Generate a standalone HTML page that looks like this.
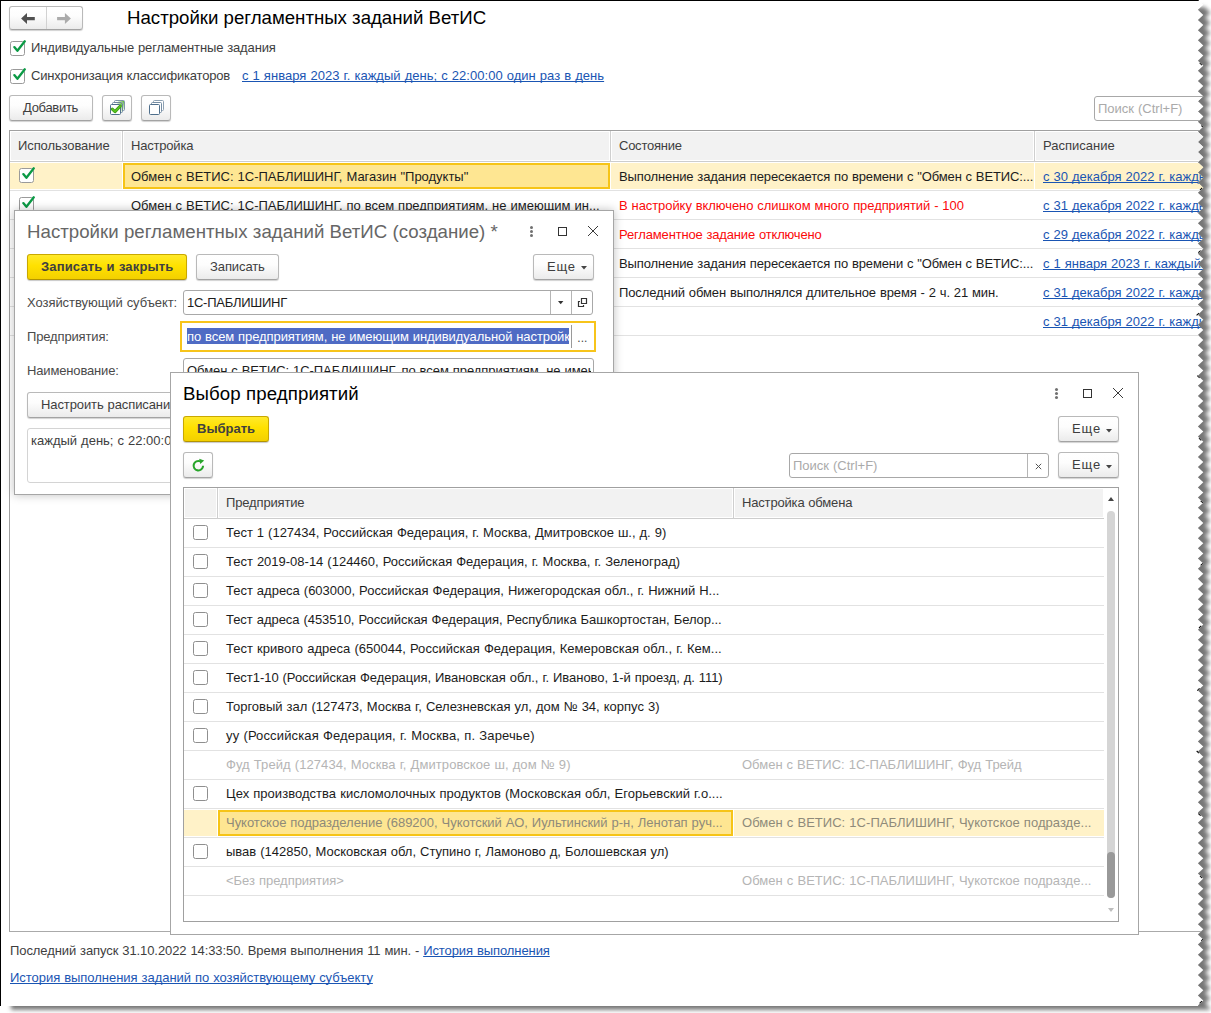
<!DOCTYPE html>
<html lang="ru"><head><meta charset="utf-8"><title>Настройки регламентных заданий ВетИС</title>
<style>
*{box-sizing:border-box;margin:0;padding:0}
html,body{width:1211px;height:1013px;background:#fff;overflow:hidden}
body{font-family:"Liberation Sans",Arial,sans-serif;font-size:13px;color:#3e3e3e;position:relative;word-spacing:.4px}
#wrap{position:absolute;left:0;top:0;width:1211px;height:1013px}
#page{position:absolute;left:0;top:0;width:1211px;height:1013px;background:#fff;clip-path:polygon(0px 0px,1198.21px 0px,1203.3px 4.79px,1197.9px 9.87px,1203.3px 14.95px,1197.9px 20.03px,1203.3px 25.11px,1197.9px 30.19px,1203.3px 35.27px,1197.9px 40.35px,1203.3px 45.43px,1197.9px 50.51px,1203.3px 55.59px,1197.9px 60.67px,1203.3px 65.75px,1197.9px 70.83px,1203.3px 75.91px,1197.9px 80.99px,1203.3px 86.07px,1197.9px 91.15px,1203.3px 96.23px,1197.9px 101.31px,1203.3px 106.39px,1197.9px 111.47px,1203.3px 116.55px,1197.9px 121.63px,1203.3px 126.71px,1197.9px 131.79px,1203.3px 136.87px,1197.9px 141.95px,1203.3px 147.03px,1197.9px 152.11px,1203.3px 157.19px,1197.9px 162.27px,1203.3px 167.35px,1197.9px 172.43px,1203.3px 177.51px,1197.9px 182.59px,1203.3px 187.67px,1197.9px 192.75px,1203.3px 197.83px,1197.9px 202.91px,1203.3px 207.99px,1197.9px 213.07px,1203.3px 218.15px,1197.9px 223.23px,1203.3px 228.31px,1197.9px 233.39px,1203.3px 238.47px,1197.9px 243.55px,1203.3px 248.63px,1197.9px 253.71px,1203.3px 258.79px,1197.9px 263.87px,1203.3px 268.95px,1197.9px 274.03px,1203.3px 279.11px,1197.9px 284.19px,1203.3px 289.27px,1197.9px 294.35px,1203.3px 299.43px,1197.9px 304.51px,1203.3px 309.59px,1197.9px 314.67px,1203.3px 319.75px,1197.9px 324.83px,1203.3px 329.91px,1197.9px 334.99px,1203.3px 340.07px,1197.9px 345.15px,1203.3px 350.23px,1197.9px 355.31px,1203.3px 360.39px,1197.9px 365.47px,1203.3px 370.55px,1197.9px 375.63px,1203.3px 380.71px,1197.9px 385.79px,1203.3px 390.87px,1197.9px 395.95px,1203.3px 401.03px,1197.9px 406.11px,1203.3px 411.19px,1197.9px 416.27px,1203.3px 421.35px,1197.9px 426.43px,1203.3px 431.51px,1197.9px 436.59px,1203.3px 441.67px,1197.9px 446.75px,1203.3px 451.83px,1197.9px 456.91px,1203.3px 461.99px,1197.9px 467.07px,1203.3px 472.15px,1197.9px 477.23px,1203.3px 482.31px,1197.9px 487.39px,1203.3px 492.47px,1197.9px 497.55px,1203.3px 502.63px,1197.9px 507.71px,1203.3px 512.79px,1197.9px 517.87px,1203.3px 522.95px,1197.9px 528.03px,1203.3px 533.11px,1197.9px 538.19px,1203.3px 543.27px,1197.9px 548.35px,1203.3px 553.43px,1197.9px 558.51px,1203.3px 563.59px,1197.9px 568.67px,1203.3px 573.75px,1197.9px 578.83px,1203.3px 583.91px,1197.9px 588.99px,1203.3px 594.07px,1197.9px 599.15px,1203.3px 604.23px,1197.9px 609.31px,1203.3px 614.39px,1197.9px 619.47px,1203.3px 624.55px,1197.9px 629.63px,1203.3px 634.71px,1197.9px 639.79px,1203.3px 644.87px,1197.9px 649.95px,1203.3px 655.03px,1197.9px 660.11px,1203.3px 665.19px,1197.9px 670.27px,1203.3px 675.35px,1197.9px 680.43px,1203.3px 685.51px,1197.9px 690.59px,1203.3px 695.67px,1197.9px 700.75px,1203.3px 705.83px,1197.9px 710.91px,1203.3px 715.99px,1197.9px 721.07px,1203.3px 726.15px,1197.9px 731.23px,1203.3px 736.31px,1197.9px 741.39px,1203.3px 746.47px,1197.9px 751.55px,1203.3px 756.63px,1197.9px 761.71px,1203.3px 766.79px,1197.9px 771.87px,1203.3px 776.95px,1197.9px 782.03px,1203.3px 787.11px,1197.9px 792.19px,1203.3px 797.27px,1197.9px 802.35px,1203.3px 807.43px,1197.9px 812.51px,1203.3px 817.59px,1197.9px 822.67px,1203.3px 827.75px,1197.9px 832.83px,1203.3px 837.91px,1197.9px 842.99px,1203.3px 848.07px,1197.9px 853.15px,1203.3px 858.23px,1197.9px 863.31px,1203.3px 868.39px,1197.9px 873.47px,1203.3px 878.55px,1197.9px 883.63px,1203.3px 888.71px,1197.9px 893.79px,1203.3px 898.87px,1197.9px 903.95px,1203.3px 909.03px,1197.9px 914.11px,1203.3px 919.19px,1197.9px 924.27px,1203.3px 929.35px,1197.9px 934.43px,1203.3px 939.51px,1197.9px 944.59px,1203.3px 949.67px,1197.9px 954.75px,1203.3px 959.83px,1197.9px 964.91px,1203.3px 969.99px,1197.9px 975.07px,1203.3px 980.15px,1197.9px 985.23px,1203.3px 990.31px,1197.9px 995.39px,1203.3px 1000.47px,1197.9px 1005.55px,1198.38px 1006px,0px 1006px);overflow:hidden}
#page:before{content:"";position:absolute;left:0;top:0;width:1211px;height:1px;background:#000;z-index:50}
#page:after{content:"";position:absolute;left:0;top:0;width:1px;height:1013px;background:#000;z-index:50}
.a{position:absolute;white-space:nowrap}
.t{position:absolute;white-space:nowrap;height:29px;line-height:29px}
.cb{position:absolute;overflow:visible}
.lnk{color:#1a55b3;text-decoration:underline;text-underline-offset:1px;text-decoration-skip-ink:none;text-decoration-thickness:1px}
.red{color:#fb0a0a}
.btn{position:absolute;height:26px;border:1px solid #b9b9b9;border-bottom-color:#a3a3a3;border-radius:3px;background:linear-gradient(#fff 0%,#fdfdfd 40%,#ebebeb 100%);box-shadow:0 1px 1px rgba(0,0,0,.18)}
.ybtn{position:absolute;height:26px;border:1px solid #c9a800;border-bottom-color:#b39400;border-radius:3px;background:linear-gradient(#ffe92a 0%,#ffe100 45%,#f3d000 100%);box-shadow:0 1px 1px rgba(0,0,0,.22)}
.b{font-weight:bold;color:#404040}
.inp{position:absolute;height:25px;border:1px solid #a8a8a8;border-radius:3px;background:#fff}
.title{font-size:18.67px;line-height:24px;height:24px;word-spacing:0}
.dlg{position:absolute;background:#fff;border:1px solid #a6a6a6}
.hdr{position:absolute;background:#f2f2f2}
.vl{position:absolute;width:1px;background:#cfcfcf}
.hl{position:absolute;height:1px;background:#e2e2e2}
.arr{position:absolute;width:0;height:0;border-left:3px solid transparent;border-right:3px solid transparent;border-top:3.5px solid #444}
.gray{color:#b5b5b5}
.dk{color:#1c1c1c}
.lb{color:#4a4a4a}
.sel{color:#8e8a7a}
</style></head>
<body>
<div id="wrap"><svg id="shadow" width="1211" height="1013" viewBox="0 0 1211 1013" style="position:absolute;left:0;top:0"><defs><filter id="bl" x="-2%" y="-2%" width="104%" height="104%"><feGaussianBlur stdDeviation="2.3"/></filter></defs><polygon points="11,7 1205.81,7 1205.1,7.67 1210.5,12.75 1205.1,17.83 1210.5,22.91 1205.1,27.99 1210.5,33.07 1205.1,38.15 1210.5,43.23 1205.1,48.31 1210.5,53.39 1205.1,58.47 1210.5,63.55 1205.1,68.63 1210.5,73.71 1205.1,78.79 1210.5,83.87 1205.1,88.95 1210.5,94.03 1205.1,99.11 1210.5,104.19 1205.1,109.27 1210.5,114.35 1205.1,119.43 1210.5,124.51 1205.1,129.59 1210.5,134.67 1205.1,139.75 1210.5,144.83 1205.1,149.91 1210.5,154.99 1205.1,160.07 1210.5,165.15 1205.1,170.23 1210.5,175.31 1205.1,180.39 1210.5,185.47 1205.1,190.55 1210.5,195.63 1205.1,200.71 1210.5,205.79 1205.1,210.87 1210.5,215.95 1205.1,221.03 1210.5,226.11 1205.1,231.19 1210.5,236.27 1205.1,241.35 1210.5,246.43 1205.1,251.51 1210.5,256.59 1205.1,261.67 1210.5,266.75 1205.1,271.83 1210.5,276.91 1205.1,281.99 1210.5,287.07 1205.1,292.15 1210.5,297.23 1205.1,302.31 1210.5,307.39 1205.1,312.47 1210.5,317.55 1205.1,322.63 1210.5,327.71 1205.1,332.79 1210.5,337.87 1205.1,342.95 1210.5,348.03 1205.1,353.11 1210.5,358.19 1205.1,363.27 1210.5,368.35 1205.1,373.43 1210.5,378.51 1205.1,383.59 1210.5,388.67 1205.1,393.75 1210.5,398.83 1205.1,403.91 1210.5,408.99 1205.1,414.07 1210.5,419.15 1205.1,424.23 1210.5,429.31 1205.1,434.39 1210.5,439.47 1205.1,444.55 1210.5,449.63 1205.1,454.71 1210.5,459.79 1205.1,464.87 1210.5,469.95 1205.1,475.03 1210.5,480.11 1205.1,485.19 1210.5,490.27 1205.1,495.35 1210.5,500.43 1205.1,505.51 1210.5,510.59 1205.1,515.67 1210.5,520.75 1205.1,525.83 1210.5,530.91 1205.1,535.99 1210.5,541.07 1205.1,546.15 1210.5,551.23 1205.1,556.31 1210.5,561.39 1205.1,566.47 1210.5,571.55 1205.1,576.63 1210.5,581.71 1205.1,586.79 1210.5,591.87 1205.1,596.95 1210.5,602.03 1205.1,607.11 1210.5,612.19 1205.1,617.27 1210.5,622.35 1205.1,627.43 1210.5,632.51 1205.1,637.59 1210.5,642.67 1205.1,647.75 1210.5,652.83 1205.1,657.91 1210.5,662.99 1205.1,668.07 1210.5,673.15 1205.1,678.23 1210.5,683.31 1205.1,688.39 1210.5,693.47 1205.1,698.55 1210.5,703.63 1205.1,708.71 1210.5,713.79 1205.1,718.87 1210.5,723.95 1205.1,729.03 1210.5,734.11 1205.1,739.19 1210.5,744.27 1205.1,749.35 1210.5,754.43 1205.1,759.51 1210.5,764.59 1205.1,769.67 1210.5,774.75 1205.1,779.83 1210.5,784.91 1205.1,789.99 1210.5,795.07 1205.1,800.15 1210.5,805.23 1205.1,810.31 1210.5,815.39 1205.1,820.47 1210.5,825.55 1205.1,830.63 1210.5,835.71 1205.1,840.79 1210.5,845.87 1205.1,850.95 1210.5,856.03 1205.1,861.11 1210.5,866.19 1205.1,871.27 1210.5,876.35 1205.1,881.43 1210.5,886.51 1205.1,891.59 1210.5,896.67 1205.1,901.75 1210.5,906.83 1205.1,911.91 1210.5,916.99 1205.1,922.07 1210.5,927.15 1205.1,932.23 1210.5,937.31 1205.1,942.39 1210.5,947.47 1205.1,952.55 1210.5,957.63 1205.1,962.71 1210.5,967.79 1205.1,972.87 1210.5,977.95 1205.1,983.03 1210.5,988.11 1205.1,993.19 1210.5,998.27 1205.1,1003.35 1210.5,1008.43 1209.04,1009.8 11,1009.8" fill="#767676" filter="url(#bl)"/></svg><div id="page">
<div class="btn" style="left:9px;top:6px;width:74px;height:24px;"></div>
<div class="vl" style="left:46px;top:7px;height:22px;background:#d2d2d2"></div>
<svg class="a" style="left:20px;top:12px" width="16" height="13" viewBox="0 0 16 13"><path d="M1.1 6.55 L7 1 L7 4.9 L14.8 4.9 L14.8 8.2 L7 8.2 L7 12.1 Z" fill="#505050"/></svg>
<svg class="a" style="left:56px;top:12px" width="16" height="13" viewBox="0 0 16 13"><path d="M14.9 6.55 L8.9 1 L8.9 4.9 L1.1 4.9 L1.1 8.2 L8.9 8.2 L8.9 12.1 Z" fill="#ababab"/></svg>
<div class="t title" style="left:127px;top:6px;letter-spacing:-0.011px;color:#000;">Настройки регламентных заданий ВетИС</div>
<svg class="cb" style="left:10px;top:38px" width="19" height="19" viewBox="0 0 19 19"><rect x="0.5" y="3.5" width="14" height="14" rx="2" fill="#fff" stroke="#9a9a9a"/><path d="M4.3 9.1 L7.4 12.8 L14.8 3.3" fill="none" stroke="#0b9a45" stroke-width="2.3" stroke-linecap="round" stroke-linejoin="round"/></svg>
<div class="t " style="left:31px;top:33px;letter-spacing:-0.124px;">Индивидуальные регламентные задания</div>
<svg class="cb" style="left:10px;top:66px" width="19" height="19" viewBox="0 0 19 19"><rect x="0.5" y="3.5" width="14" height="14" rx="2" fill="#fff" stroke="#9a9a9a"/><path d="M4.3 9.1 L7.4 12.8 L14.8 3.3" fill="none" stroke="#0b9a45" stroke-width="2.3" stroke-linecap="round" stroke-linejoin="round"/></svg>
<div class="t " style="left:31px;top:61px;letter-spacing:-0.185px;">Синхронизация классификаторов</div>
<div class="t lnk" style="left:242px;top:61px;letter-spacing:0.030px;">с 1 января 2023 г. каждый день; с 22:00:00 один раз в день</div>
<div class="btn" style="left:9px;top:95px;width:84px;"></div>
<div class="t " style="left:23px;top:93px;letter-spacing:-0.308px;">Добавить</div>
<div class="btn" style="left:102px;top:95px;width:30px;"></div>
<div class="btn" style="left:141px;top:95px;width:30px;"></div>
<svg class="a" style="left:109px;top:99px" width="18" height="18" viewBox="0 0 18 18"><defs><linearGradient id="gg" x1="0" y1="1" x2="1" y2="0"><stop offset="0.35" stop-color="#6cc644" stop-opacity="0"/><stop offset="1" stop-color="#4aa82a" stop-opacity=".95"/></linearGradient></defs><rect x="5.5" y="1.5" width="10" height="10" rx="1" fill="#fff" stroke="#7d94a8"/><rect x="9" y="2" width="6" height="9" fill="url(#gg)"/><rect x="3.5" y="3.5" width="10" height="10" rx="1" fill="#fff" stroke="#6f889f"/><rect x="8" y="4" width="5" height="9" fill="url(#gg)"/><rect x="1.5" y="5.5" width="10" height="10" rx="1" fill="#fff" stroke="#4f6f8c"/><path d="M3.3 10.2 L6 12.6 L11.3 7" fill="none" stroke="#3a9a14" stroke-width="3" stroke-linecap="round" stroke-linejoin="round"/><path d="M3.3 10.2 L6 12.6 L11.3 7" fill="none" stroke="#58c420" stroke-width="1.6" stroke-linecap="round" stroke-linejoin="round"/></svg>
<svg class="a" style="left:148px;top:99px" width="18" height="18" viewBox="0 0 18 18"><rect x="5.5" y="1.5" width="10" height="10" rx="1" fill="#fff" stroke="#8ea1b3"/><rect x="3.5" y="3.5" width="10" height="10" rx="1" fill="#fff" stroke="#758da3"/><rect x="1.5" y="5.5" width="10" height="10" rx="1" fill="#fff" stroke="#4f6f8c"/></svg>
<div class="inp" style="left:1094px;top:96px;width:140px;height:25px;"></div>
<div class="t " style="left:1098px;top:94px;color:#aaa;">Поиск (Ctrl+F)</div>
<div class="a" style="left:9px;top:130px;width:1230px;height:802px;border:1px solid #a0a0a0;border-bottom-color:#aaa;"></div>
<div class="hdr" style="left:11px;top:132px;width:1230px;height:28px;"></div>
<div class="hl" style="left:10px;top:161px;width:1230px;background:#cdcdcd;"></div>
<div class="vl" style="left:121px;top:131px;width:3px;height:30px;background:#fff;"></div>
<div class="vl" style="left:122px;top:131px;height:31px;"></div>
<div class="vl" style="left:609px;top:131px;width:3px;height:30px;background:#fff;"></div>
<div class="vl" style="left:610px;top:131px;height:31px;"></div>
<div class="vl" style="left:1033px;top:131px;width:3px;height:30px;background:#fff;"></div>
<div class="vl" style="left:1034px;top:131px;height:31px;"></div>
<div class="t " style="left:18px;top:131px;letter-spacing:-0.101px;">Использование</div>
<div class="t " style="left:131px;top:131px;letter-spacing:-0.200px;">Настройка</div>
<div class="t " style="left:619px;top:131px;letter-spacing:-0.247px;">Состояние</div>
<div class="t " style="left:1043px;top:131px;">Расписание</div>
<div class="a" style="left:10px;top:163px;width:112px;height:26px;background:#fff2c8;"></div>
<div class="a" style="left:611px;top:163px;width:423px;height:26px;background:#fff2c8;"></div>
<div class="a" style="left:1035px;top:163px;width:200px;height:26px;background:#fff2c8;"></div>
<div class="a" style="left:123px;top:163px;width:487px;height:26px;background:#fee692;border:2px solid #f6c417;"></div>
<div class="hl" style="left:10px;top:190px;width:1230px;"></div>
<div class="hl" style="left:10px;top:219px;width:1230px;"></div>
<div class="hl" style="left:10px;top:248px;width:1230px;"></div>
<div class="hl" style="left:10px;top:277px;width:1230px;"></div>
<div class="hl" style="left:10px;top:306px;width:1230px;"></div>
<div class="hl" style="left:10px;top:335px;width:1230px;"></div>
<svg class="cb" style="left:19px;top:165px" width="19" height="19" viewBox="0 0 19 19"><rect x="0.5" y="3.5" width="14" height="14" rx="2" fill="#fff" stroke="#9a9a9a"/><path d="M4.3 9.1 L7.4 12.8 L14.8 3.3" fill="none" stroke="#0b9a45" stroke-width="2.3" stroke-linecap="round" stroke-linejoin="round"/></svg>
<div class="t dk" style="left:131px;top:162px;letter-spacing:-0.015px;">Обмен с ВЕТИС: 1С-ПАБЛИШИНГ, Магазин "Продукты"</div>
<div class="t dk" style="left:619px;top:162px;letter-spacing:-0.124px;">Выполнение задания пересекается по времени с "Обмен с ВЕТИС:...</div>
<div class="t lnk" style="left:1043px;top:162px;">с 30 декабря 2022 г. каждый день</div>
<svg class="cb" style="left:19px;top:194px" width="19" height="19" viewBox="0 0 19 19"><rect x="0.5" y="3.5" width="14" height="14" rx="2" fill="#fff" stroke="#9a9a9a"/><path d="M4.3 9.1 L7.4 12.8 L14.8 3.3" fill="none" stroke="#0b9a45" stroke-width="2.3" stroke-linecap="round" stroke-linejoin="round"/></svg>
<div class="t dk" style="left:131px;top:191px;letter-spacing:-0.013px;">Обмен с ВЕТИС: 1С-ПАБЛИШИНГ, по всем предприятиям, не имеющим ин...</div>
<div class="t red" style="left:619px;top:191px;letter-spacing:-0.072px;">В настройку включено слишком много предприятий - 100</div>
<div class="t lnk" style="left:1043px;top:191px;">с 31 декабря 2022 г. каждый день</div>
<div class="t red" style="left:619px;top:220px;letter-spacing:-0.160px;">Регламентное задание отключено</div>
<div class="t lnk" style="left:1043px;top:220px;">с 29 декабря 2022 г. каждый день</div>
<div class="t dk" style="left:619px;top:249px;letter-spacing:-0.124px;">Выполнение задания пересекается по времени с "Обмен с ВЕТИС:...</div>
<div class="t lnk" style="left:1043px;top:249px;">с 1 января 2023 г. каждый день</div>
<div class="t dk" style="left:619px;top:278px;letter-spacing:-0.105px;">Последний обмен выполнялся длительное время - 2 ч. 21 мин.</div>
<div class="t lnk" style="left:1043px;top:278px;">с 31 декабря 2022 г. каждый день</div>
<div class="t lnk" style="left:1043px;top:307px;">с 31 декабря 2022 г. каждый день</div>
<div class="t " style="left:10px;top:936px;letter-spacing:-0.085px;">Последний запуск 31.10.2022 14:33:50. Время выполнения 11 мин. - <span class="lnk">История выполнения</span></div>
<div class="t lnk" style="left:10px;top:963px;letter-spacing:-0.031px;">История выполнения заданий по хозяйствующему субъекту</div>
<div class="dlg" style="left:14px;top:210px;width:600px;height:285px;box-shadow:0 0 9px rgba(0,0,0,.25)">
<div class="t title" style="left:12px;top:9px;letter-spacing:0.022px;color:#666;">Настройки регламентных заданий ВетИС (создание) *</div>
<div class="a" style="left:515.0px;top:15.0px;width:3px;height:3px;border-radius:50%;background:#707070;"></div>
<div class="a" style="left:515.0px;top:19.0px;width:3px;height:3px;border-radius:50%;background:#707070;"></div>
<div class="a" style="left:515.0px;top:23.0px;width:3px;height:3px;border-radius:50%;background:#707070;"></div>
<div class="a" style="left:543.0px;top:16.0px;width:9px;height:9px;border:1px solid #333;"></div>
<svg class="a" style="left:572px;top:13.5px" width="12" height="12" viewBox="0 0 12 12"><path d="M1 1 L11 11 M11 1 L1 11" stroke="#3a3a3a" stroke-width="1" fill="none"/></svg>
<div class="ybtn" style="left:12px;top:43px;width:160px;"></div>
<div class="t b" style="left:26px;top:41px;letter-spacing:0.156px;">Записать и закрыть</div>
<div class="btn" style="left:181px;top:43px;width:83px;"></div>
<div class="t " style="left:195px;top:41px;letter-spacing:-0.095px;">Записать</div>
<div class="btn" style="left:518px;top:43px;width:61px;"></div>
<div class="t " style="left:532px;top:41px;letter-spacing:0.823px;">Еще</div>
<svg class="a" style="left:566px;top:55.19999999999999px" width="6" height="4" viewBox="0 0 6 4"><path d="M0 0H6L3 3.6Z" fill="#444"/></svg>
<div class="t lb" style="left:12px;top:77px;letter-spacing:-0.054px;">Хозяйствующий субъект:</div>
<div class="inp" style="left:168px;top:79px;width:410px;"></div>
<div class="vl" style="left:535px;top:80px;height:23px;background:#b5b5b5;"></div>
<div class="vl" style="left:556px;top:80px;height:23px;background:#b5b5b5;"></div>
<svg class="a" style="left:542.7px;top:89.80000000000001px" width="6" height="4" viewBox="0 0 6 4"><path d="M0 0H5.4L2.7 3.3Z" fill="#333"/></svg>
<svg class="a" style="left:562px;top:86px" width="11" height="11" viewBox="0 0 11 11"><path d="M4.5 1.5 H9.5 V6.5 H4.5 Z" fill="none" stroke="#333" stroke-width="1.2"/><path d="M3 4.5 H1.5 V9.5 H6.5 V8" fill="none" stroke="#333" stroke-width="1.2"/></svg>
<div class="t dk" style="left:172px;top:77px;letter-spacing:-0.260px;">1С-ПАБЛИШИНГ</div>
<div class="t lb" style="left:12px;top:111px;letter-spacing:-0.150px;">Предприятия:</div>
<div class="a" style="left:165px;top:110px;width:416px;height:31px;border:2px solid #f7c41b;background:#fff;"></div>
<div class="a" style="left:172px;top:117px;width:382px;height:16px;background:#4f6bc4;overflow:hidden;"></div>
<div class="t " style="left:172px;top:111px;color:#fff;width:382px;overflow:hidden;letter-spacing:-.08px;">по всем предприятиям, не имеющим индивидуальной настройки</div>
<div class="vl" style="left:556px;top:114px;height:23px;background:#9a9a9a;"></div>
<div class="t " style="left:562.3px;top:112.5px;font-size:12px;color:#4a4a4a;word-spacing:0;">...</div>
<div class="t lb" style="left:12px;top:145px;letter-spacing:-0.153px;">Наименование:</div>
<div class="inp" style="left:168px;top:147px;width:411px;"></div>
<div class="t dk" style="left:172px;top:145px;width:404px;overflow:hidden;letter-spacing:-.05px;">Обмен с ВЕТИС: 1С-ПАБЛИШИНГ, по всем предприятиям, не имеющим индивидуальной</div>
<div class="btn" style="left:12px;top:181px;width:170px;"></div>
<div class="t " style="left:26px;top:179px;letter-spacing:-.1px;">Настроить расписание</div>
<div class="a" style="left:12px;top:217px;width:567px;height:55px;border:1px solid #d4d4d4;border-radius:3px;"></div>
<div class="t " style="left:16px;top:215px;">каждый день; с 22:00:00 один раз в день</div>
</div>
<div class="dlg" style="left:170px;top:372px;width:969px;height:563px">
<div class="t title" style="left:12px;top:9px;letter-spacing:0.094px;color:#000;">Выбор предприятий</div>
<div class="a" style="left:884.0px;top:15.0px;width:3px;height:3px;border-radius:50%;background:#707070;"></div>
<div class="a" style="left:884.0px;top:19.0px;width:3px;height:3px;border-radius:50%;background:#707070;"></div>
<div class="a" style="left:884.0px;top:23.0px;width:3px;height:3px;border-radius:50%;background:#707070;"></div>
<div class="a" style="left:912.0px;top:16.0px;width:9px;height:9px;border:1px solid #333;"></div>
<svg class="a" style="left:941px;top:13.5px" width="12" height="12" viewBox="0 0 12 12"><path d="M1 1 L11 11 M11 1 L1 11" stroke="#3a3a3a" stroke-width="1" fill="none"/></svg>
<div class="ybtn" style="left:12px;top:43px;width:86px;"></div>
<div class="t b" style="left:26px;top:41px;">Выбрать</div>
<div class="btn" style="left:887px;top:43px;width:61px;"></div>
<div class="t " style="left:901px;top:41px;letter-spacing:0.923px;">Еще</div>
<svg class="a" style="left:935px;top:55.60000000000002px" width="6" height="4" viewBox="0 0 6 4"><path d="M0 0H6L3 3.6Z" fill="#444"/></svg>
<div class="btn" style="left:887px;top:79px;width:61px;"></div>
<div class="t " style="left:901px;top:77px;letter-spacing:0.923px;">Еще</div>
<svg class="a" style="left:935px;top:91.60000000000002px" width="6" height="4" viewBox="0 0 6 4"><path d="M0 0H6L3 3.6Z" fill="#444"/></svg>
<div class="btn" style="left:12px;top:79px;width:30px;"></div>
<svg class="a" style="left:19.5px;top:84.5px" width="15" height="15" viewBox="0 0 15 15"><g transform="scale(1.08)"><path d="M11.2 7.2 A4.4 4.4 0 1 1 8.6 3.1" fill="none" stroke="#28a52a" stroke-width="1.9"/><path d="M7.6 0.6 L12.2 2.2 L8.6 5.6 Z" fill="#28a52a"/></g></svg>
<div class="inp" style="left:618px;top:80px;width:260px;"></div>
<div class="vl" style="left:856px;top:81px;height:23px;background:#b5b5b5;"></div>
<div class="t " style="left:622px;top:78px;color:#aaa;">Поиск (Ctrl+F)</div>
<svg class="a" style="left:863.5px;top:89.5px" width="7" height="7" viewBox="0 0 7 7"><path d="M0.8 0.8 L6.2 6.2 M6.2 0.8 L0.8 6.2" stroke="#555" stroke-width="1"/></svg>
<div class="a" style="left:12px;top:114px;width:936px;height:435px;border:1px solid #a0a0a0;"></div>
<div class="hdr" style="left:14px;top:116px;width:918px;height:28px;"></div>
<div class="hl" style="left:13px;top:145px;width:920px;background:#cdcdcd;"></div>
<div class="vl" style="left:45px;top:115px;width:3px;height:30px;background:#fff;"></div>
<div class="vl" style="left:46px;top:115px;height:31px;"></div>
<div class="vl" style="left:561px;top:115px;width:3px;height:30px;background:#fff;"></div>
<div class="vl" style="left:562px;top:115px;height:31px;"></div>
<div class="t " style="left:55px;top:115px;letter-spacing:-0.153px;">Предприятие</div>
<div class="t " style="left:571px;top:115px;letter-spacing:-0.172px;">Настройка обмена</div>
<div class="hl" style="left:13px;top:174px;width:920px;"></div>
<svg class="cb" style="left:22px;top:149px" width="19" height="19" viewBox="0 0 19 19"><rect x="0.5" y="3.5" width="14" height="14" rx="2" fill="#fff" stroke="#8f8f8f"/></svg>
<div class="t dk" style="left:55px;top:145px;letter-spacing:-0.007px;">Тест 1 (127434, Российская Федерация, г. Москва, Дмитровское ш., д. 9)</div>
<div class="hl" style="left:13px;top:203px;width:920px;"></div>
<svg class="cb" style="left:22px;top:178px" width="19" height="19" viewBox="0 0 19 19"><rect x="0.5" y="3.5" width="14" height="14" rx="2" fill="#fff" stroke="#8f8f8f"/></svg>
<div class="t dk" style="left:55px;top:174px;letter-spacing:-0.004px;">Тест 2019-08-14 (124460, Российская Федерация, г. Москва, г. Зеленоград)</div>
<div class="hl" style="left:13px;top:232px;width:920px;"></div>
<svg class="cb" style="left:22px;top:207px" width="19" height="19" viewBox="0 0 19 19"><rect x="0.5" y="3.5" width="14" height="14" rx="2" fill="#fff" stroke="#8f8f8f"/></svg>
<div class="t dk" style="left:55px;top:203px;letter-spacing:-0.009px;">Тест адреса (603000, Российская Федерация, Нижегородская обл., г. Нижний Н...</div>
<div class="hl" style="left:13px;top:261px;width:920px;"></div>
<svg class="cb" style="left:22px;top:236px" width="19" height="19" viewBox="0 0 19 19"><rect x="0.5" y="3.5" width="14" height="14" rx="2" fill="#fff" stroke="#8f8f8f"/></svg>
<div class="t dk" style="left:55px;top:232px;letter-spacing:-0.040px;">Тест адреса (453510, Российская Федерация, Республика Башкортостан, Белор...</div>
<div class="hl" style="left:13px;top:290px;width:920px;"></div>
<svg class="cb" style="left:22px;top:265px" width="19" height="19" viewBox="0 0 19 19"><rect x="0.5" y="3.5" width="14" height="14" rx="2" fill="#fff" stroke="#8f8f8f"/></svg>
<div class="t dk" style="left:55px;top:261px;letter-spacing:0.030px;">Тест кривого адреса (650044, Российская Федерация, Кемеровская обл., г. Кем...</div>
<div class="hl" style="left:13px;top:319px;width:920px;"></div>
<svg class="cb" style="left:22px;top:294px" width="19" height="19" viewBox="0 0 19 19"><rect x="0.5" y="3.5" width="14" height="14" rx="2" fill="#fff" stroke="#8f8f8f"/></svg>
<div class="t dk" style="left:55px;top:290px;letter-spacing:-0.043px;">Тест1-10 (Российская Федерация, Ивановская обл., г. Иваново, 1-й проезд, д. 111)</div>
<div class="hl" style="left:13px;top:348px;width:920px;"></div>
<svg class="cb" style="left:22px;top:323px" width="19" height="19" viewBox="0 0 19 19"><rect x="0.5" y="3.5" width="14" height="14" rx="2" fill="#fff" stroke="#8f8f8f"/></svg>
<div class="t dk" style="left:55px;top:319px;">Торговый зал (127473, Москва г, Селезневская ул, дом № 34, корпус 3)</div>
<div class="hl" style="left:13px;top:377px;width:920px;"></div>
<svg class="cb" style="left:22px;top:352px" width="19" height="19" viewBox="0 0 19 19"><rect x="0.5" y="3.5" width="14" height="14" rx="2" fill="#fff" stroke="#8f8f8f"/></svg>
<div class="t dk" style="left:55px;top:348px;letter-spacing:0.136px;">уу (Российская Федерация, г. Москва, п. Заречье)</div>
<div class="hl" style="left:13px;top:406px;width:920px;"></div>
<div class="t gray" style="left:55px;top:377px;letter-spacing:0.070px;">Фуд Трейд (127434, Москва г, Дмитровское ш, дом № 9)</div>
<div class="t gray" style="left:571px;top:377px;letter-spacing:-0.007px;">Обмен с ВЕТИС: 1С-ПАБЛИШИНГ, Фуд Трейд</div>
<div class="hl" style="left:13px;top:435px;width:920px;"></div>
<svg class="cb" style="left:22px;top:410px" width="19" height="19" viewBox="0 0 19 19"><rect x="0.5" y="3.5" width="14" height="14" rx="2" fill="#fff" stroke="#8f8f8f"/></svg>
<div class="t dk" style="left:55px;top:406px;letter-spacing:0.038px;">Цех производства кисломолочных продуктов (Московская обл, Егорьевский г.о....</div>
<div class="hl" style="left:13px;top:464px;width:920px;"></div>
<div class="a" style="left:13px;top:437px;width:33px;height:26px;background:#fff2c8;"></div>
<div class="a" style="left:563px;top:437px;width:370px;height:26px;background:#fff2c8;"></div>
<div class="a" style="left:47px;top:437px;width:515px;height:26px;background:#fee692;border:2px solid #f6c417;"></div>
<div class="t sel" style="left:55px;top:435px;letter-spacing:-0.023px;">Чукотское подразделение (689200, Чукотский АО, Иультинский р-н, Ленотап руч...</div>
<div class="t sel" style="left:571px;top:435px;letter-spacing:0.036px;">Обмен с ВЕТИС: 1С-ПАБЛИШИНГ, Чукотское подразде...</div>
<div class="hl" style="left:13px;top:493px;width:920px;"></div>
<svg class="cb" style="left:22px;top:468px" width="19" height="19" viewBox="0 0 19 19"><rect x="0.5" y="3.5" width="14" height="14" rx="2" fill="#fff" stroke="#8f8f8f"/></svg>
<div class="t dk" style="left:55px;top:464px;letter-spacing:-0.005px;">ывав (142850, Московская обл, Ступино г, Ламоново д, Болошевская ул)</div>
<div class="hl" style="left:13px;top:522px;width:920px;"></div>
<div class="t gray" style="left:55px;top:493px;letter-spacing:-0.023px;">&lt;Без предприятия&gt;</div>
<div class="t gray" style="left:571px;top:493px;letter-spacing:0.036px;">Обмен с ВЕТИС: 1С-ПАБЛИШИНГ, Чукотское подразде...</div>
<div class="a" style="left:936px;top:138px;width:8px;height:387px;border-radius:4px;background:#d5d5d5;"></div>
<div class="a" style="left:936px;top:479px;width:8px;height:46px;border-radius:4px;background:#999;"></div>
<div class="a" style="left:937px;top:124px;width:0px;height:0px;border-left:3.5px solid transparent;border-right:3.5px solid transparent;border-bottom:4px solid #444;"></div>
<div class="a" style="left:937px;top:535px;width:0px;height:0px;border-left:3.5px solid transparent;border-right:3.5px solid transparent;border-top:4px solid #bdbdbd;"></div>
</div>
<svg class="a" style="left:0;top:0;z-index:60" width="1211" height="1013" viewBox="0 0 1211 1013"><g stroke="#000" stroke-width="1.1"><line x1="1199.7" y1="62.9" x2="1202.0" y2="65.1"/><line x1="1201.4" y1="125.5" x2="1203.7" y2="127.6"/><line x1="1202.3" y1="188.0" x2="1200.0" y2="190.2"/><line x1="1200.7" y1="250.6" x2="1198.3" y2="252.7"/><line x1="1199.0" y1="313.1" x2="1196.6" y2="315.3"/><line x1="1197.3" y1="375.7" x2="1199.7" y2="377.8"/><line x1="1199.0" y1="438.2" x2="1201.3" y2="440.4"/><line x1="1200.7" y1="500.8" x2="1203.0" y2="502.9"/><line x1="1203.0" y1="563.3" x2="1200.7" y2="565.5"/><line x1="1201.3" y1="625.9" x2="1199.0" y2="628.0"/><line x1="1199.6" y1="688.4" x2="1197.3" y2="690.6"/><line x1="1196.7" y1="751.0" x2="1199.0" y2="753.1"/><line x1="1198.4" y1="813.5" x2="1200.7" y2="815.7"/><line x1="1200.0" y1="876.1" x2="1202.4" y2="878.2"/><line x1="1203.7" y1="938.6" x2="1201.3" y2="940.8"/><line x1="1202.0" y1="1001.2" x2="1199.6" y2="1003.3"/></g></svg>
</div></div>
</body></html>
